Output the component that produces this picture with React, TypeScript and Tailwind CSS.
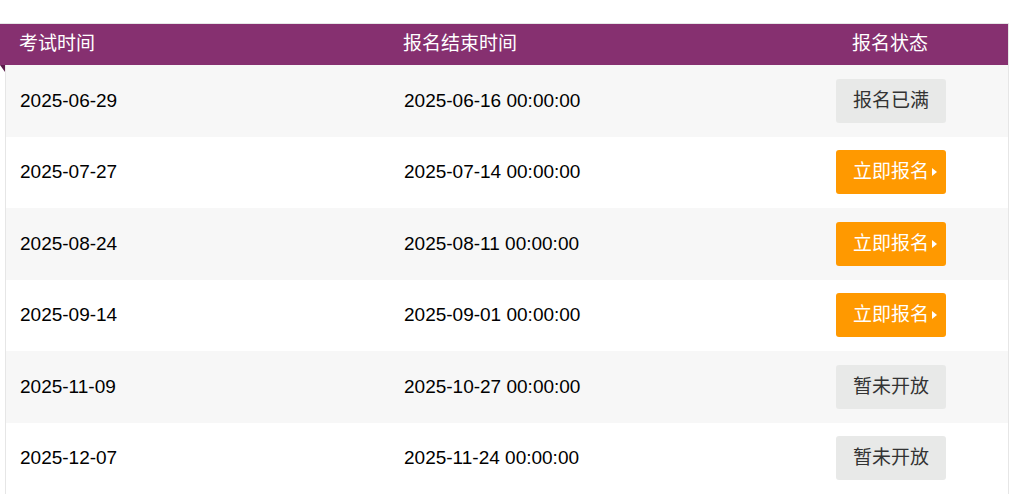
import React from 'react';

type Row = { exam: string; end: string; status: 'full' | 'open' | 'closed' };

const rows: Row[] = [
  { exam: '2025-06-29', end: '2025-06-16 00:00:00', status: 'full' },
  { exam: '2025-07-27', end: '2025-07-14 00:00:00', status: 'open' },
  { exam: '2025-08-24', end: '2025-08-11 00:00:00', status: 'open' },
  { exam: '2025-09-14', end: '2025-09-01 00:00:00', status: 'open' },
  { exam: '2025-11-09', end: '2025-10-27 00:00:00', status: 'closed' },
  { exam: '2025-12-07', end: '2025-11-24 00:00:00', status: 'closed' },
];

function StatusButton({ status }: { status: Row['status'] }) {
  if (status === 'open') {
    return (
      <button className="relative w-[110px] h-[44px] rounded-[3px] bg-[#ff9900] text-white text-[19px] flex items-center justify-center">
        立即报名
        <span className="absolute right-[9px] top-1/2 -translate-y-1/2 w-0 h-0 border-y-[4px] border-y-transparent border-l-[5px] border-l-white" />
      </button>
    );
  }
  return (
    <button className="w-[110px] h-[44px] rounded-[3px] bg-[#e8e9e8] text-[#333] text-[19px] flex items-center justify-center">
      {status === 'full' ? '报名已满' : '暂未开放'}
    </button>
  );
}

export default function App() {
  return (
    <div
      className="w-[1020px] h-[496px] bg-white overflow-hidden pt-[23px]"
      style={{ fontFamily: '"Liberation Sans", Arial, "Noto Sans CJK SC", sans-serif' }}
    >
      <div className="w-[1009px] border-t border-r border-[#e6e6e6]">
        {/* header */}
        <div className="relative h-[41px] bg-[#863070] text-white text-[19px] flex items-center pl-[19px]">
          <div className="w-[384px]">考试时间</div>
          <div className="w-[432px]">报名结束时间</div>
          <div className="w-[110px] text-center">报名状态</div>
          <span className="absolute left-0 top-full w-0 h-0 border-t-[7px] border-t-[#5a1a4a] border-l-[5px] border-l-transparent" />
        </div>

        {/* body */}
        <div className="ml-[5px] border-l border-[#e6e6e6]">
          {rows.map((r, i) => (
            <div
              key={r.exam}
              className={`h-[71.5px] flex items-center pl-[14px] text-[19px] text-black ${i % 2 === 0 ? 'bg-[#f7f7f7]' : 'bg-white'}`}
            >
              <div className="w-[384px]">{r.exam}</div>
              <div className="w-[432px]">{r.end}</div>
              <div className="w-[110px] flex justify-center">
                <StatusButton status={r.status} />
              </div>
            </div>
          ))}
        </div>
      </div>
    </div>
  );
}
